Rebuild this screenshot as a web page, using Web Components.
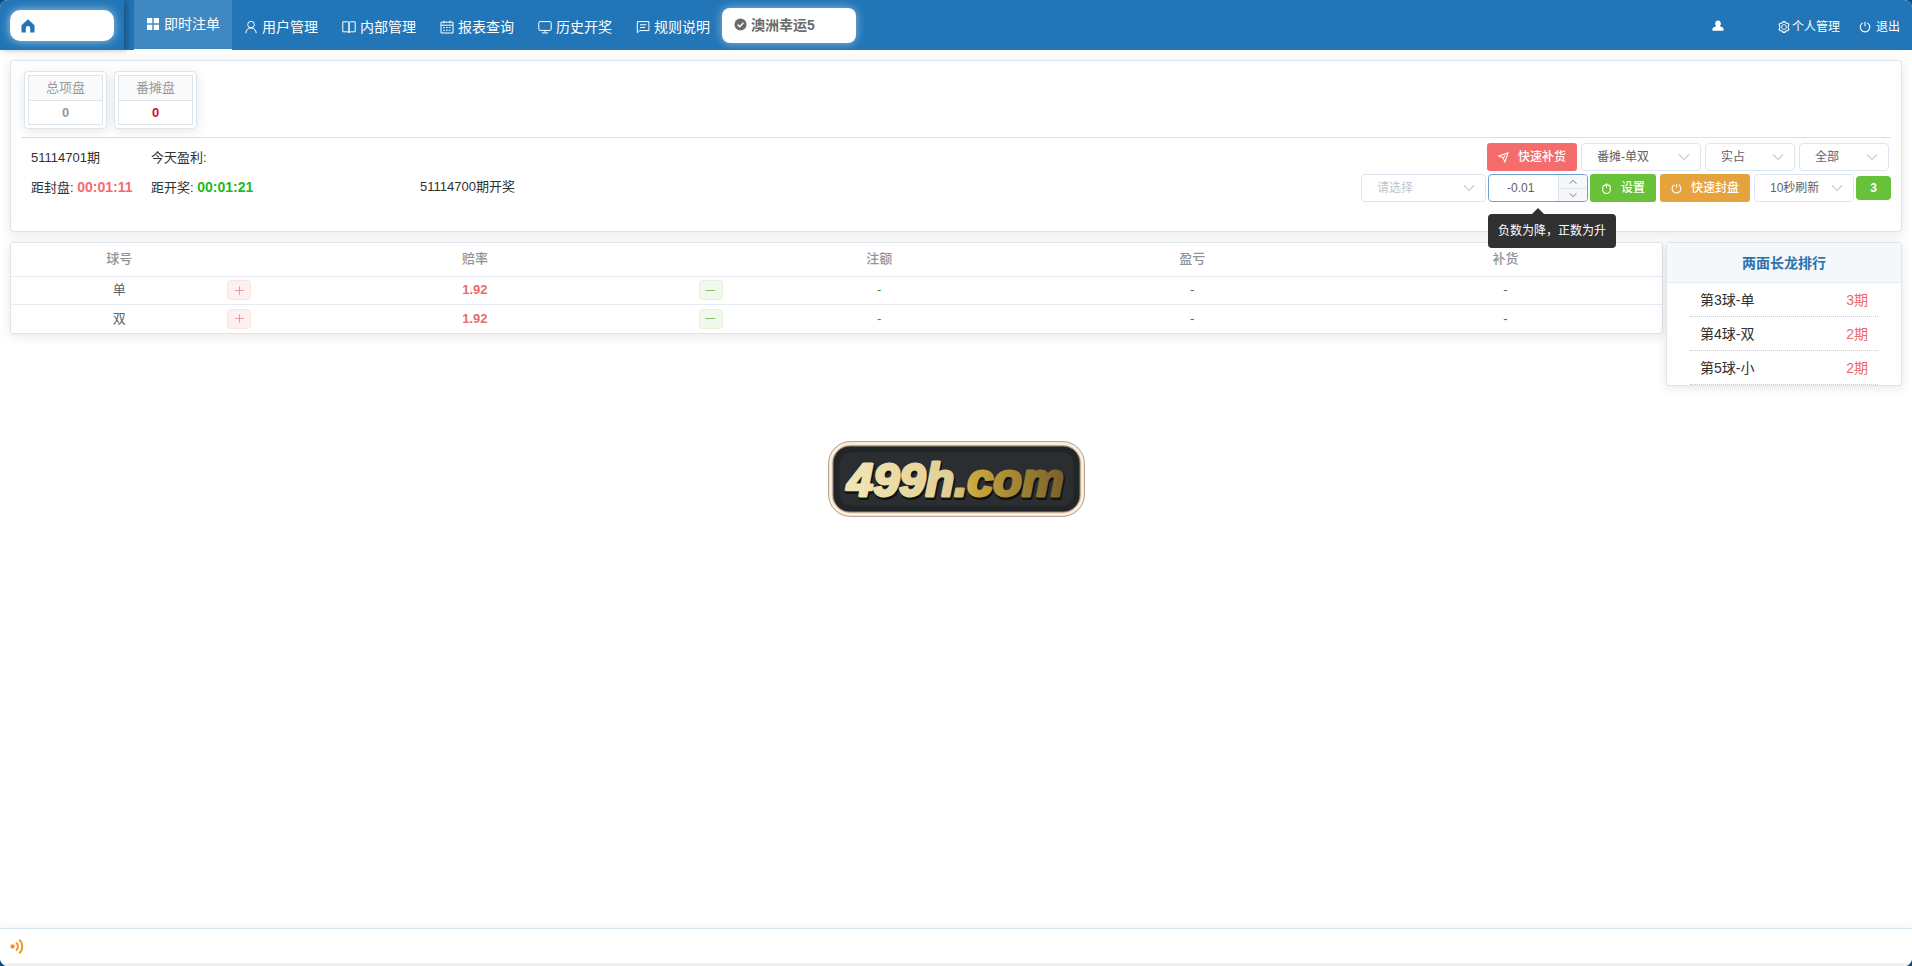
<!DOCTYPE html>
<html lang="zh-CN">
<head>
<meta charset="utf-8">
<title>即时注单</title>
<style>
  body {
    margin: 0;
    background: #0c4a7c;
    color: #303133;
    font: 13px/20px "Liberation Sans", "Noto Sans CJK SC", sans-serif;
    --line: #dce5ec;
    --brand: #2276b7;
    --shadow: 0 2px 12px rgba(0, 0, 0, .1);
  }
</style>
</head>
<body>
<bet-app></bet-app>

<script>
const ICONS = {
  home: '<path fill="currentColor" stroke="none" d="M7 0.300.500 6.300V13.500h4.300V9.200a2.200 2.200 0 0 1 4.400 0v4.300h4.300V6.300z"/>',
  grid: '<path fill="currentColor" stroke="none" d="M1 1h5.300v5.300H1zM7.700 1H13v5.300H7.700zM1 7.700h5.300V13H1zM7.700 7.700H13V13H7.700z"/>',
  user: '<circle cx="7" cy="4.600" r="3.300"/><path d="M1.800 13.200c.2-3.100 2.100-5.300 5.200-5.300s5 2.200 5.200 5.300"/>',
  book: '<path d="M.8 1.800h5q1.200 0 1.200 1v9.900q0-.9-1.200-.9h-5zM13.200 1.800h-5q-1.200 0-1.200 1v9.900q0-.9 1.200-.9h5z"/>',
  calendar: '<path d="M1 2.200h12v10.800H1zM1 5.200h12M4 .6v2.600M10 .6v2.600"/><path stroke-dasharray="1.600 1.200" d="M3.200 7.600h8M3.200 10.300h8"/>',
  screen: '<rect x=".8" y="1.600" width="12.400" height="8.800" rx="1"/><path d="M7 10.400v2.200M4 12.900h6"/>',
  note: '<path d="M1.300 1.600h11.600v9H3.600l-2.300 2.200zM4 4.800h6.400M4 7.500h5"/>',
  check: '<circle cx="7" cy="7" r="6.500" fill="currentColor" stroke="none"/><path stroke="#fff" stroke-width="1.500" d="m4 7.100 2.200 2.200 4-4.200"/>',
  person: '<path fill="currentColor" stroke="none" d="M7 .6a3.600 3.600 0 0 1 2.100 6.400l3.300 1.700q1 .6 1 1.700v2.200H.6v-2.200q0-1.100 1-1.700L4.900 7A3.600 3.600 0 0 1 7 .6z"/>',
  gear: '<circle cx="7" cy="7" r="2.800"/><path stroke-width="1.300" d="m5.200 2.100.8-1.400h2l.8 1.400 1.200.6h1.600l1.100 1.800-.8 1.400v2.200l.8 1.400-1.100 1.800H10l-1.200.6-.8 1.400H6l-.8-1.400-1.200-.6H2.400L1.300 9.500l.8-1.400V5.900l-.8-1.400 1.100-1.800H4z"/>',
  power: '<path d="M7 .8v5.400M4.300 2.200a5.600 5.600 0 1 0 5.400 0"/>',
  send: '<path d="m12.800 1.200-4 11.400-2.400-5.200L1 5.200zM6.400 7.400l2.800-2.800"/>',
  mouse: '<path d="M5.200 2.700h3.600a3 3 0 0 1 3 3v2.800a4.800 4.800 0 0 1-9.600 0V5.700a3 3 0 0 1 3-3zM7 .4v6"/>',
  down: '<path d="m1.200 4 5.800 6 5.800-6"/>',
  up: '<path d="m1.200 10 5.800-6 5.800 6"/>',
  plus: '<path d="M1.500 7h11M7 1.500v11"/>',
  minus: '<path d="M1 7h12"/>',
  sound: '<circle cx="2.400" cy="7" r="2" fill="currentColor" stroke="none"/><path stroke-width="1.800" d="M5.600 3.200a4.900 4.900 0 0 1 0 7.600M8.600.6a8.600 8.600 0 0 1 0 12.800"/>'
};

const define = (name, markup, setup) => {
  const template = document.createElement('template');
  customElements.define(name, class extends HTMLElement {
    connectedCallback() {
      if (this.shadowRoot) return;
      template.innerHTML = typeof markup === 'function' ? markup(this) : markup;
      this.attachShadow({ mode: 'open' }).append(template.content.cloneNode(true));
      if (setup) setup(this, this.shadowRoot);
    }
  });
};

define('ui-icon', el => `
  <style>
    :host { display: inline-flex; flex: none; width: var(--size, 14px); height: var(--size, 14px); }
    svg { width: 100%; height: 100%; overflow: visible; }
  </style>
  <svg viewBox="0 0 14 14" fill="none" stroke="currentColor" stroke-width="${el.getAttribute('weight') || 1}" aria-hidden="true">${ICONS[el.getAttribute('name')]}</svg>`);

define('nav-item', el => `
  <style>
    :host { display: block; }
    a {
      box-sizing: border-box; display: flex; align-items: center; gap: 4px;
      width: 98px; height: 50px; padding: 4px 0 0 12px;
      color: #fff; font-size: 14px; white-space: nowrap; text-decoration: none;
    }
    :host([active]) a { padding: 0 0 2px 12px; background: #4088c1; border-bottom: 1px solid #fff; }
  </style>
  <a href="#"><ui-icon name="${el.getAttribute('icon')}"></ui-icon><slot></slot></a>`);

define('app-header', `
  <style>
    :host { display: flex; height: 50px; background: var(--brand); color: #fff; }
    a { color: inherit; text-decoration: none; }
    .brand { box-sizing: border-box; width: 124px; padding: 10px 10px 9px; box-shadow: 3px 0 6px rgba(0, 0, 0, .3); }
    .brand a {
      display: flex; align-items: center; height: 31px; padding-left: 11px;
      border-radius: 10px; background: #fff; color: var(--brand); box-shadow: 0 0 10px rgba(255, 255, 255, .6);
    }
    nav { display: flex; margin-left: 10px; }
    .game {
      box-sizing: border-box; display: flex; align-items: center; gap: 4px;
      width: 134px; height: 35px; margin: 8px 0 0; padding: 0 12px 2px;
      border: 0; border-radius: 8px; background: #fff; color: #6b6b6b;
      box-shadow: 0 0 10px rgba(255, 255, 255, .5); font: inherit; font-size: 14px; font-weight: bold;
    }
    .game ui-icon { --size: 13px; }
    .account { display: flex; align-items: center; margin-left: auto; padding: 3px 12px 0 0; font-size: 12px; }
    .account a { display: flex; align-items: center; }
    .account ui-icon { --size: 12px; }
    .me { margin-right: 54px; padding-bottom: 2px; }
    .settings { gap: 2px; margin-right: 19px; }
    .logout { gap: 5px; }
  </style>
  <div class="brand"><a href="#" aria-label="首页"><ui-icon name="home"></ui-icon></a></div>
  <nav>
    <nav-item icon="grid" active>即时注单</nav-item>
    <nav-item icon="user">用户管理</nav-item>
    <nav-item icon="book">内部管理</nav-item>
    <nav-item icon="calendar">报表查询</nav-item>
    <nav-item icon="screen">历史开奖</nav-item>
    <nav-item icon="note">规则说明</nav-item>
  </nav>
  <button class="game" type="button"><ui-icon name="check"></ui-icon>澳洲幸运5</button>
  <div class="account">
    <a class="me" href="#" aria-label="账户"><ui-icon name="person"></ui-icon></a>
    <a class="settings" href="#"><ui-icon name="gear"></ui-icon>个人管理</a>
    <a class="logout" href="#"><ui-icon name="power" weight="1.300"></ui-icon>退出</a>
  </div>`);

define('stat-box', el => `
  <style>
    :host { display: block; box-sizing: border-box; width: 83px; padding: 3px; border: 1px solid var(--line); border-radius: 4px; box-shadow: var(--shadow); color: #999; text-align: center; }
    dl { margin: 0; border: 1px solid var(--line); }
    dt { height: 24px; line-height: 24px; background: #fafafa; border-bottom: 1px solid var(--line); }
    dd { height: 23px; margin: 0; line-height: 23px; font-size: 13px; font-weight: bold; }
    :host([alert]) dd { color: #c8141e; }
  </style>
  <dl><dt>${el.getAttribute('label')}</dt><dd><slot></slot></dd></dl>`);

define('ui-select', el => `
  <style>
    :host { display: block; position: relative; width: 90px; }
    select {
      box-sizing: border-box; width: 100%; height: 28px; padding: 0 30px 0 15px;
      appearance: none; border: 1px solid #dce5f0; border-radius: 4px; background: #fff;
      color: #606266; font: inherit; font-size: 12px; outline: 0;
    }
    :host([wide]) { width: 120px; }
    :host([empty]) { width: 125px; }
    :host([timer]) { width: 100px; }
    :host([empty]) select { color: #c0c4cc; }
    ui-icon { --size: 12px; position: absolute; right: 11px; top: 8px; color: #c0c4cc; pointer-events: none; }
  </style>
  <select aria-label="${el.getAttribute('label')}"><option>${el.getAttribute('value')}</option></select>
  <ui-icon name="down" weight="1.300"></ui-icon>`);

define('ui-button', el => `
  <style>
    :host { display: block; }
    button {
      display: flex; align-items: center; gap: 9px; height: 28px; padding: 0 11px;
      border: 0; border-radius: 3px; background: var(--fill); color: #fff;
      font: inherit; font-size: 12px; font-weight: 500; white-space: nowrap;
    }
    ui-icon { --size: 11px; }
    :host([tone="danger"]) { --fill: #f56c6c; }
    :host([tone="success"]) { --fill: #67c23a; }
    :host([tone="warning"]) { --fill: #e6a23c; }
  </style>
  <button type="button"><ui-icon name="${el.getAttribute('icon')}" weight="1.400"></ui-icon><slot></slot></button>`);

define('number-stepper', `
  <style>
    :host { position: relative; display: block; width: 100px; }
    .field { box-sizing: border-box; display: flex; height: 28px; border: 1px solid #6f9fcb; border-radius: 4px; overflow: hidden; background: #fff; }
    input { box-sizing: border-box; flex: 1; min-width: 0; padding: 0 18px; border: 0; outline: 0; background: none; color: #606266; font: inherit; font-size: 12px; }
    .steps { display: grid; grid-template-rows: 1fr 1fr; width: 28px; border-left: 1px solid var(--line); background: #f5f7fa; }
    .steps button { display: grid; place-items: center; padding: 0; border: 0; background: none; color: #606266; }
    .steps button + button { border-top: 1px solid var(--line); }
    .steps ui-icon { --size: 8px; }
    .tip {
      position: absolute; left: 0; top: 40px; z-index: 5; padding: 7px 10px;
      border-radius: 4px; background: #303133; color: #fff; font-size: 12px; white-space: nowrap;
    }
    .tip::before { content: ""; position: absolute; left: 44px; top: -6px; border: 6px solid transparent; border-top: 0; border-bottom-color: #303133; }
  </style>
  <div class="field">
    <input type="text" value="-0.01" aria-label="赔率调整" aria-describedby="tip">
    <div class="steps">
      <button type="button" aria-label="增加"><ui-icon name="up" weight="1.500"></ui-icon></button>
      <button type="button" aria-label="减少"><ui-icon name="down" weight="1.500"></ui-icon></button>
    </div>
  </div>
  <div class="tip" id="tip" role="tooltip">负数为降，正数为升</div>`);

define('control-panel', `
  <style>
    :host { display: block; box-sizing: border-box; height: 172px; padding: 10px; border: 1px solid var(--line); border-radius: 4px; background: #fff; box-shadow: var(--shadow); }
    .stats { display: flex; gap: 7px; height: 66px; padding-left: 3px; align-items: flex-start; border-bottom: 1px solid #dcdfe6; }
    .bar { display: flex; justify-content: space-between; padding: 5px 0 0 10px; }
    .info { display: grid; grid-template-columns: 120px 269px auto; grid-auto-rows: 29px; line-height: 30px; white-space: nowrap; }
    .info b { font-size: 14px; }
    .close { color: #f56c6c; }
    .open { color: #22b922; }
    .controls { display: grid; gap: 3px; justify-items: end; }
    .row { display: flex; align-items: center; gap: 4px; }
    .filters { padding-right: 2px; }
    .tight { display: flex; gap: 2px; align-items: center; }
    output { width: 35px; height: 24px; border-radius: 4px; background: #67c23a; color: #fff; font-size: 12px; font-weight: bold; line-height: 24px; text-align: center; }
  </style>
  <div class="stats">
    <stat-box label="总项盘">0</stat-box>
    <stat-box label="番摊盘" alert>0</stat-box>
  </div>
  <div class="bar">
    <div class="info">
      <span>51114701期</span><span>今天盈利:</span><span></span>
      <span>距封盘: <b class="close">00:01:11</b></span><span>距开奖: <b class="open">00:01:21</b></span><span>51114700期开奖</span>
    </div>
    <div class="controls">
      <div class="row filters">
        <ui-button tone="danger" icon="send">快速补货</ui-button>
        <ui-select wide label="玩法" value="番摊-单双"></ui-select>
        <ui-select label="占成" value="实占"></ui-select>
        <ui-select label="范围" value="全部"></ui-select>
      </div>
      <div class="row">
        <div class="tight">
          <ui-select empty label="选项" value="请选择"></ui-select>
          <number-stepper></number-stepper>
          <ui-button tone="success" icon="mouse">设置</ui-button>
        </div>
        <ui-button tone="warning" icon="power">快速封盘</ui-button>
        <div class="tight">
          <ui-select timer label="刷新间隔" value="10秒刷新"></ui-select>
          <output>3</output>
        </div>
      </div>
    </div>
  </div>`);

define('odds-table', `
  <style>
    :host { display: block; border: 1px solid var(--line); border-radius: 3px; background: #fff; box-shadow: var(--shadow); }
    table { width: 100%; table-layout: fixed; border-collapse: separate; border-spacing: 0; text-align: center; color: #606266; }
    th, td { box-sizing: border-box; padding: 0 0 1px; }
    th { height: 34px; color: #909399; font-weight: 500; border-bottom: 1px solid #e6ebf1; }
    td { height: 28px; }
    tr:not(:last-child) td { border-bottom: 1px solid #e6ebf1; }
    .ball { width: 13.100%; }
    .odds { width: 30%; }
    .line { display: flex; justify-content: space-between; align-items: center; height: 22px; }
    b { color: #e86c6c; font-size: 13px; }
    button { display: grid; place-items: center; width: 24px; height: 20px; padding: 0; border: 1px solid #fde2e2; border-radius: 4px; background: #fef0f0; color: #f08080; }
    button.less { border-color: #e1f3d8; background: #f0f9eb; color: #67b04a; }
    button ui-icon { --size: 11px; }
    .stake { color: #22a022; }
  </style>
  <table>
    <thead><tr><th class="ball">球号</th><th class="odds">赔率</th><th>注额</th><th>盈亏</th><th>补货</th></tr></thead>
    <tbody></tbody>
  </table>`, (el, root) => {
  root.querySelector('tbody').innerHTML = ['单', '双'].map(ball => `
    <tr>
      <td>${ball}</td>
      <td><div class="line">
        <button type="button" aria-label="升赔率"><ui-icon name="plus"></ui-icon></button>
        <b>1.92</b>
        <button class="less" type="button" aria-label="降赔率"><ui-icon name="minus"></ui-icon></button>
      </div></td>
      <td class="stake">-</td><td>-</td><td>-</td>
    </tr>`).join('');
});

define('streak-panel', `
  <style>
    :host { display: block; border: 1px solid var(--line); border-radius: 3px; background: #fff; box-shadow: var(--shadow); font-size: 14px; }
    h2 { height: 39px; margin: 0; border-bottom: 1px solid #e2ebf2; background: #f4f8fb; color: #2b73ad; font-size: 14px; line-height: 40px; text-align: center; }
    ul { margin: 0; padding: 0 23px; list-style: none; }
    li { display: flex; justify-content: space-between; height: 33px; padding: 0 10px; border-bottom: 1px dotted #bdd2e0; line-height: 34px; }
    em { color: #ea6b6b; font-style: normal; }
  </style>
  <h2>两面长龙排行</h2>
  <ul>
    <li><span>第3球-单</span><em>3期</em></li>
    <li><span>第4球-双</span><em>2期</em></li>
    <li><span>第5球-小</span><em>2期</em></li>
  </ul>`);

define('site-logo', `
  <style>
    :host { display: block; width: 257px; height: 76px; }
    svg { display: block; width: 100%; height: 100%; overflow: visible; }
    text { font: italic bold 47px "Liberation Sans", sans-serif; stroke-linejoin: round; }
  </style>
  <svg viewBox="0 0 257 76" role="img" aria-label="499h.com">
    <defs>
      <linearGradient id="gold"><stop offset="0" stop-color="#f3e6b6"/><stop offset=".48" stop-color="#dfcf96"/><stop offset=".58" stop-color="#c9a83e"/><stop offset="1" stop-color="#79602a"/></linearGradient>
    </defs>
    <rect x=".5" y=".5" width="256" height="75" rx="22" fill="#e9d9c6" stroke="#b9a695"/>
    <rect x="2.500" y="2.500" width="252" height="71" rx="20" fill="none" stroke="#fff1df" stroke-width="2"/>
    <rect x="5" y="5" width="247" height="66" rx="17" fill="#222527" stroke="#8f8074"/>
    <rect x="11" y="11" width="235" height="54" rx="12" fill="#2b2e31" stroke="#232629"/>
    <text x="20" y="57" fill="#111" stroke="#111" stroke-width="4">499h.com</text>
    <text x="19" y="55" fill="url(#gold)" stroke="url(#gold)" stroke-width="3">499h.com</text>
  </svg>`);

define('app-footer', `
  <style>
    :host { display: flex; align-items: center; height: 34px; padding-left: 10px; border-top: 1px solid #d5e4ec; border-bottom: 3px solid #f0f0f0; background: #fff; box-shadow: var(--shadow); color: #e8962e; }
    ui-icon { --size: 15px; }
  </style>
  <ui-icon name="sound"></ui-icon>`);

define('bet-app', `
  <style>
    :host { display: flex; flex-direction: column; min-height: 100vh; border-radius: 8px; overflow: hidden; background: #fff; }
    main { flex: 1; padding: 10px 10px 0; }
    .boards { display: flex; align-items: flex-start; gap: 3px; margin-top: 10px; }
    odds-table { flex: 1; min-width: 0; }
    streak-panel { flex: none; width: 234px; }
    site-logo { margin: 55px auto 0; }
  </style>
  <app-header></app-header>
  <main>
    <control-panel></control-panel>
    <div class="boards">
      <odds-table></odds-table>
      <streak-panel></streak-panel>
    </div>
    <site-logo></site-logo>
  </main>
  <app-footer></app-footer>`);
</script>
</body>
</html>
